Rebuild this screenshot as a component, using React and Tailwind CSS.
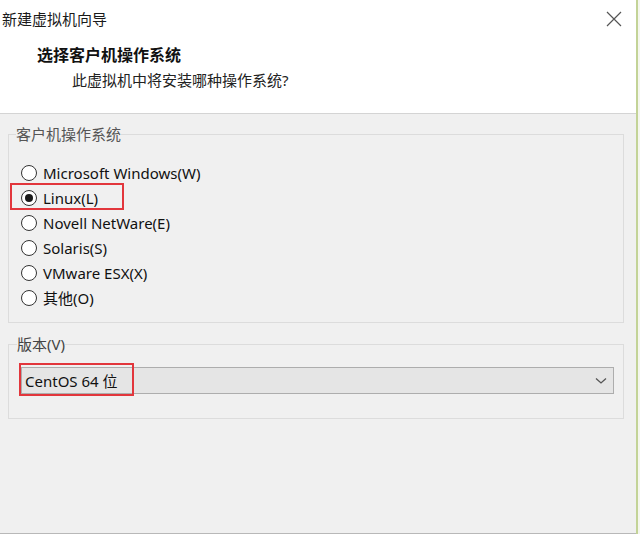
import React from "react";

const font = { fontFamily: '"Noto Sans", "Noto Sans CJK SC", sans-serif' };

function Radio({ label, checked, marked }) {
  return (
    <div className="relative flex items-center h-[25px] gap-[6px]">
      {marked && (
        <div className="absolute -left-[11px] -top-[2px] w-[114px] h-[27px] border-2 border-[#e2363c]" />
      )}
      <span className="w-[16px] h-[16px] rounded-full border border-[#333] bg-white flex items-center justify-center">
        {checked && <span className="w-[8px] h-[8px] rounded-full bg-[#1a1a1a]" />}
      </span>
      <span className="text-[15px] leading-[20px] text-[#111]">{label}</span>
    </div>
  );
}

export default function App() {
  const options = [
    "Microsoft Windows(W)",
    "Linux(L)",
    "Novell NetWare(E)",
    "Solaris(S)",
    "VMware ESX(X)",
    "其他(O)",
  ];

  return (
    <div className="w-[640px] h-[534px] flex bg-[#f0f0f0] overflow-hidden" style={font}>
      <div className="flex-1 flex flex-col border-b border-[#b8b8b8]">
        {/* header */}
        <div className="h-[114px] bg-white border-b border-[#d4d4d4] flex flex-col">
          <div className="flex items-start justify-between pt-[9px] pl-[2px] pr-[14px]">
            <span className="text-[15px] leading-[20px] text-[#1a1a1a]">新建虚拟机向导</span>
            <svg width="16" height="16" viewBox="0 0 16 16" className="mt-[2px]">
              <path d="M1 1L15 15M15 1L1 15" stroke="#555" strokeWidth="1.2" />
            </svg>
          </div>
          <div className="mt-[16px] pl-[37px] text-[16px] leading-[20px] font-bold text-[#111]">
            选择客户机操作系统
          </div>
          <div className="mt-[5px] pl-[72px] text-[15px] leading-[20px] text-[#222]">
            此虚拟机中将安装哪种操作系统?
          </div>
        </div>

        {/* body */}
        <div className="flex flex-col px-[8px] pt-[10px] w-[632px]">
          <fieldset className="border border-[#dcdcdc] px-[7px] pb-[12px]">
            <legend className="text-[15px] leading-[20px] text-[#555]">客户机操作系统</legend>
            <div className="flex flex-col pt-[16px] pl-[5px]">
              {options.map((o) => (
                <Radio key={o} label={o} checked={o === "Linux(L)"} marked={o === "Linux(L)"} />
              ))}
            </div>
          </fieldset>

          <fieldset className="mt-[11px] border border-[#dcdcdc] pl-[8px] pr-[9px] pb-[24px]">
            <legend className="text-[15px] leading-[20px] text-[#444]">版本(V)</legend>
            <div className="relative mt-[13px] ml-[4px] h-[27px] bg-[#e5e5e5] border border-[#adadad] flex items-center justify-between pl-[3px] pr-[6px]">
              <div className="absolute -left-[3px] -top-[5px] w-[115px] h-[33px] border-2 border-[#e2363c]" />
              <span className="text-[15px] leading-[20px] text-[#111]">CentOS 64 位</span>
              <svg width="12" height="8" viewBox="0 0 12 8">
                <path d="M1 1.5L6 6L11 1.5" stroke="#555" strokeWidth="1.3" fill="none" />
              </svg>
            </div>
          </fieldset>
        </div>
      </div>
      <div className="w-[2px] bg-[#c3d397]" />
      <div className="w-[2px] bg-[#f4f6ee]" />
    </div>
  );
}
